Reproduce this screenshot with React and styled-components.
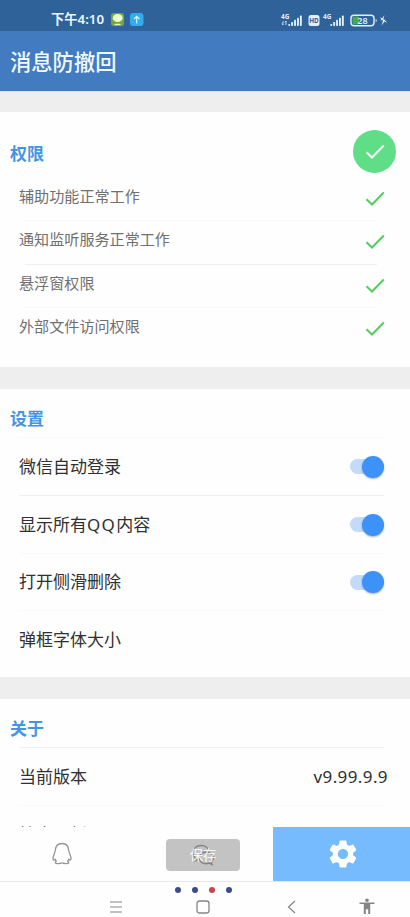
import React from 'react';
import { useState } from 'react';
import { MdSettings } from 'react-icons/md';
import styled, { createGlobalStyle } from 'styled-components';

const GlobalStyle = createGlobalStyle`
	* {
		box-sizing: border-box;
	}

	body {
		margin: 0;

		background: #eeeeee;

		font-family: 'Noto Sans', 'Noto Sans CJK SC', sans-serif;
	}

	svg {
		display: block;
	}
`;

const Container = styled.div`
	display: flex;
	flex-direction: column;

	width: 100%;
	height: 917px;
	overflow: hidden;
`;

const StatusBar = styled.div`
	display: flex;
	flex-shrink: 0;
	justify-content: space-between;

	height: 31px;
	padding: 9px 21px 0 51px;

	background: #2f6299;

	color: #e9f7ff;
`;

const StatusGroup = styled.div`
	display: flex;
	align-items: center;

	height: 21px;
`;

const Clock = styled.span`
	width: 54px;
	margin-right: 6px;

	font-size: 13.3px;
	font-weight: 600;
	line-height: 21px;
	white-space: nowrap;
`;

const Header = styled.header`
	flex-shrink: 0;

	height: 61px;
	padding-left: 10px;
	border-bottom: 1px solid #cfe2f5;

	background: #437bc0;

	color: #effcff;
	font-size: 21.3px;
	font-weight: 500;
	line-height: 61px;
`;

const Main = styled.main`
	display: flex;
	flex: 1;
	flex-direction: column;
	gap: 22px;

	min-height: 0;
	padding-top: 20px;
	overflow: hidden;
`;

const Section = styled.section`
	flex-shrink: 0;

	height: ${({ $height }) => $height}px;

	background: #fefefe;
`;

const SectionHeader = styled.div`
	display: flex;
	align-items: center;
	justify-content: space-between;

	height: ${({ $height }) => $height}px;
	padding: ${({ $top }) => $top}px 14px 0 10px;
`;

const SectionTitle = styled.h2`
	margin: 0;

	color: #4395e0;
	font-size: 17px;
	font-weight: 700;
	line-height: 24px;
`;

const StatusCircle = styled.div`
	display: flex;
	align-items: center;
	justify-content: center;

	width: 43px;
	height: 43px;
	margin-top: -5px;
	padding-top: 1px;
	border-radius: 50%;

	background: #5fdd87;

	color: #f4fff6;
`;

const PermissionRow = styled.div`
	display: flex;
	justify-content: space-between;

	height: 43.3px;
	padding: 8px 25px 0 19px;

	color: #707070;
	font-size: 15.1px;
	line-height: 22px;

	svg {
		margin-top: 6px;

		color: #55cc5f;
	}
`;

const Divider = styled.div`
	height: 1px;
	margin: 0 ${({ $right }) => $right}px -1px ${({ $left }) => $left}px;

	background: ${({ $faint }) => ($faint ? '#f9f9f9' : '#f0f0f0')};
`;

const SettingRow = styled.div`
	display: flex;
	align-items: center;
	justify-content: space-between;

	height: 57.8px;
	padding: 2px 26px 0 19px;

	color: #303030;
	font-size: 17px;
	line-height: 26px;
`;

const Latin = styled.span`
	letter-spacing: 1.3px;
`;

const Version = styled.span`
	margin-right: -4px;

	font-size: 17px;
	letter-spacing: 0.4px;
`;

const Switch = styled.button`
	display: flex;
	align-items: center;

	height: 22px;
	padding: 0;
	border: none;

	background: none;
`;

const SwitchTrack = styled.span`
	display: flex;
	align-items: center;
	justify-content: ${({ $on }) => ($on ? 'flex-end' : 'flex-start')};

	width: 34px;
	height: 15px;
	border-radius: 8px;

	background: #c3dbf8;
`;

const SwitchThumb = styled.span`
	flex-shrink: 0;

	width: 22px;
	height: 22px;
	border-radius: 50%;

	background: #3d92f8;
	box-shadow: 0 1px 2px rgba(0, 40, 110, 0.35);
`;

const TabBar = styled.nav`
	display: grid;
	flex-shrink: 0;
	grid-template-columns: 124px 149px 137px;

	height: 54px;

	background: #fefefe;
`;

const Tab = styled.div`
	display: flex;
	align-items: center;
	justify-content: center;

	padding-left: ${({ $left = 0 }) => $left}px;

	background: ${({ $active }) => ($active ? '#76bbfd' : 'transparent')};

	color: #fcffff;
`;

const SaveBox = styled.div`
	display: grid;
	place-items: center;

	width: 74px;
	height: 32px;
	margin-top: 1px;
	border-radius: 4px;

	background: #c3c3c3;

	& > * {
		grid-area: 1 / 1;
	}
`;

const SaveLabel = styled.span`
	z-index: 1;

	color: #f6f6f6;
	font-size: 13.3px;
	line-height: 20px;
`;

const SystemBar = styled.footer`
	flex-shrink: 0;

	height: 36px;
	border-top: 1px solid #e8e8ea;

	background: #fefefe;
`;

const Dots = styled.div`
	display: flex;
	gap: 11px;

	height: 12px;
	padding: 5px 0 0 174.5px;
`;

const Dot = styled.span`
	width: 6px;
	height: 6px;
	border-radius: 50%;

	background: ${({ $active }) => ($active ? '#cb4447' : '#3d4a8e')};
`;

const SystemKeys = styled.div`
	display: grid;
	align-items: center;
	grid-template-columns: 87px 91px 72px 16px;

	height: 23px;
	padding: 2px 0 0 109px;
`;

const permissions = [
	{ name: '辅助功能正常工作' },
	{ name: '通知监听服务正常工作', faint: true },
	{ name: '悬浮窗权限' },
	{ name: '外部文件访问权限', faint: true },
];

const settings = [
	{ id: 'wechat', label: '微信自动登录', faint: true },
	{
		id: 'qq',
		label: (
			<>
				显示所有<Latin>QQ</Latin>内容
			</>
		),
	},
	{ id: 'swipe', label: '打开侧滑删除', faint: true },
];

function CheckIcon() {
	return (
		<svg width="20" height="16" viewBox="0 0 20 16" fill="none" stroke="currentColor" strokeWidth="2">
			<path d="M1.5 8.3L7 13.5L18.8 1.5" />
		</svg>
	);
}

function StatusIcons() {
	const bars = [0, 1, 2, 3, 4];

	return (
		<svg width="108" height="18" viewBox="0 0 108 18" fill="#dff1ff">
			<g fontFamily="Noto Sans" fontSize="6.4" fontWeight="700">
				<text x="0" y="8">4G</text>
				<text x="42" y="8">4G</text>
			</g>
			<path d="M2 10v4M1 12.5l1 1.5M5 14v-4M4 11.5l1-1.5" stroke="#dff1ff" strokeWidth="0.8" />
			{bars.map(i => (
				<g key={i}>
					<rect x={7.3 + i * 2.9} y={13 - i * 2.1} width="1.9" height={2 + i * 2.1} rx="0.7" />
					<rect x={49.3 + i * 2.9} y={13 - i * 2.1} width="1.9" height={2 + i * 2.1} rx="0.7" />
				</g>
			))}
			<rect x="27.5" y="4" width="11" height="11" rx="2.5" />
			<text x="33" y="12" textAnchor="middle" fontFamily="Noto Sans" fontSize="6.3" fontWeight="700" fill="#345f91">
				HD
			</text>
			<rect x="70" y="4.2" width="23" height="10.6" rx="3" fill="none" stroke="#dff1ff" strokeWidth="1.4" />
			<path d="M73 5.5h5v8h-5q-1.5 0-1.5-1.5v-5q0-1.5 1.5-1.5z" fill="#49a653" />
			<text x="81.5" y="12.8" textAnchor="middle" fontFamily="Noto Sans" fontSize="9" fontWeight="600">
				28
			</text>
			<path d="M94.7 7.5q2 2 0 4z" />
			<path d="M103.5 4.2l-4 5h2.6l-1.6 5.6l4.2-6h-2.6z" />
			<path d="M99.5 6.8l6 4.4" stroke="#dff1ff" strokeWidth="1" />
		</svg>
	);
}

function AppBadges() {
	return (
		<svg width="34" height="15" viewBox="0 0 34 15">
			<rect x="0" y="1" width="13" height="13" rx="2.5" fill="#70a938" />
			<ellipse cx="6.7" cy="6" rx="5" ry="4" fill="#eafbd5" />
			<path d="M3.5 12.5h6" stroke="#f0f4c0" strokeWidth="1.4" />
			<rect x="19" y="1" width="13.5" height="13" rx="3.2" fill="#33aaf1" />
			<path d="M25.7 11.5V4.5M23 7l2.7-2.7L28.4 7" fill="none" stroke="#d9f5ff" strokeWidth="1.2" />
		</svg>
	);
}

function PenguinIcon() {
	return (
		<svg width="22" height="24" viewBox="0 0 22 24" fill="none" stroke="#949494" strokeWidth="1.3" strokeLinejoin="round">
			<path d="M11 1.5C6.5 1.5 4.6 4.6 4.3 8.3C4.1 11 2 13.4 2 16.6C2 18.5 3 18.2 4.2 17.2C4.4 18 4.8 18.7 5.4 19.2C4.4 19.7 4 20.3 4.3 20.9C5 22 9.5 21.8 11 20.8C12.5 21.8 17 22 17.7 20.9C18 20.3 17.6 19.7 16.6 19.2C17.2 18.7 17.6 18 17.8 17.2C19 18.2 20 18.5 20 16.6C20 13.4 17.9 11 17.7 8.3C17.4 4.6 15.5 1.5 11 1.5Z" />
		</svg>
	);
}

function ChatIcon() {
	return (
		<svg width="24" height="22" viewBox="0 0 24 22" fill="none" stroke="#848484" strokeWidth="1.4">
			<path d="M18 7.5C17 3.7 13.6 1.5 10 1.5C5.3 1.5 1.8 4.8 1.8 8.8C1.8 11.2 3 13.1 4.9 14.5L4.2 17L7.2 15.6" />
			<path d="M15 8C11 8 8 10.6 8 13.8C8 17.2 11.1 19.7 15 19.7L18.3 19.1L21 20.5L20.3 18.2C21.7 17 22.5 15.5 22.5 13.8C22.5 10.6 19 8 15 8Z" />
		</svg>
	);
}

function Toggle() {
	const [isOn, setIsOn] = useState(true);

	return (
		<Switch onClick={() => setIsOn(!isOn)}>
			<SwitchTrack $on={isOn}>
				<SwitchThumb />
			</SwitchTrack>
		</Switch>
	);
}

function App() {
	return (
		<Container>
			<GlobalStyle />
			<StatusBar>
				<StatusGroup>
					<Clock>下午4:10</Clock>
					<AppBadges />
				</StatusGroup>
				<StatusGroup>
					<StatusIcons />
				</StatusGroup>
			</StatusBar>
			<Header>消息防撤回</Header>
			<Main>
				<Section $height={255}>
					<SectionHeader $height={65} $top={18}>
						<SectionTitle>权限</SectionTitle>
						<StatusCircle>
							<CheckIcon />
						</StatusCircle>
					</SectionHeader>
					{permissions.map(({ name, faint }, index) => (
						<React.Fragment key={name}>
							{index > 0 && <Divider $left={25} $right={33} $faint={faint} />}
							<PermissionRow>
								<span>{name}</span>
								<CheckIcon />
							</PermissionRow>
						</React.Fragment>
					))}
				</Section>
				<Section $height={288}>
					<SectionHeader $height={48} $top={11}>
						<SectionTitle>设置</SectionTitle>
					</SectionHeader>
					{settings.map(({ id, label, faint }) => (
						<React.Fragment key={id}>
							<Divider $left={19} $right={26} $faint={faint} />
							<SettingRow>
								<span>{label}</span>
								<Toggle />
							</SettingRow>
						</React.Fragment>
					))}
					<Divider $left={19} $right={26} $faint />
					<SettingRow>弹框字体大小</SettingRow>
				</Section>
				<Section $height={200}>
					<SectionHeader $height={48} $top={11}>
						<SectionTitle>关于</SectionTitle>
					</SectionHeader>
					<Divider $left={19} $right={26} />
					<SettingRow>
						<span>当前版本</span>
						<Version>v9.99.9.9</Version>
					</SettingRow>
					<Divider $left={19} $right={26} $faint />
					<SettingRow>检查更新</SettingRow>
				</Section>
			</Main>
			<TabBar>
				<Tab>
					<PenguinIcon />
				</Tab>
				<Tab $left={9}>
					<SaveBox>
						<ChatIcon />
						<SaveLabel>保存</SaveLabel>
					</SaveBox>
				</Tab>
				<Tab $active $left={3}>
					<MdSettings size={34} />
				</Tab>
			</TabBar>
			<SystemBar>
				<Dots>
					<Dot />
					<Dot />
					<Dot $active />
					<Dot />
				</Dots>
				<SystemKeys>
					<svg width="14" height="14" viewBox="0 0 14 14" stroke="#858585" strokeWidth="1.2">
						<path d="M1 2h12M1 7h12M1 12h12" />
					</svg>
					<svg width="14" height="14" viewBox="0 0 14 14" fill="none" stroke="#858585" strokeWidth="1.3">
						<rect x="1" y="1" width="12" height="12" rx="2.5" />
					</svg>
					<svg width="9" height="14" viewBox="0 0 9 14" fill="none" stroke="#858585" strokeWidth="1.2">
						<path d="M8 1L1.5 7L8 13" />
					</svg>
					<svg width="16" height="17" viewBox="0 0 16 17" fill="#858585">
						<circle cx="8" cy="2.2" r="1.8" />
						<path d="M0.5 4.5h15V6h-4.3v10H9.2v-4.8H6.8V16H4.8V6H0.5z" />
					</svg>
				</SystemKeys>
			</SystemBar>
		</Container>
	);
}

export default App;
